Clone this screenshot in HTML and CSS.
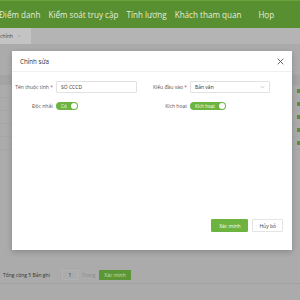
FILE: index.html
```html
<!DOCTYPE html>
<html lang="vi">
<head>
<meta charset="utf-8">
<link rel="stylesheet" href="styles.css">
</head>
<body>
<header class="nav">
  <span class="nav-item first">Điểm danh</span>
  <span class="nav-item">Kiểm soát truy cập</span>
  <span class="nav-item">Tính lương</span>
  <span class="nav-item">Khách tham quan</span>
  <span class="nav-item wide">Họp</span>
  <span class="nav-item">N</span>
</header>
<div class="tabs">
  <div class="tab">chỉnh <span class="tab-x">×</span></div>
</div>
<main class="content">
  <div class="table">
    <div class="thead"></div>
    <div class="trow"><i class="ico"></i></div>
    <div class="trow"><i class="ico"></i></div>
    <div class="trow"><i class="ico"></i></div>
    <div class="trow"><i class="ico"></i></div>
    <div class="trow"><i class="ico"></i></div>
  </div>
  <div class="pager">
    <span class="total">Tổng cộng 5 Bản ghi</span>
    <span class="page-input">1</span>
    <span class="page-label">Trang</span>
    <span class="page-btn">Xác minh</span>
  </div>
</main>

<div class="modal">
  <div class="modal-head">
    <span class="modal-title">Chỉnh sửa</span>
    <svg class="close" width="7" height="7" viewBox="0 0 10 10"><path d="M1 1L9 9M9 1L1 9" stroke="#555" stroke-width="1.3" fill="none"/></svg>
  </div>
  <div class="modal-body">
    <div class="grid">
      <div class="field">
        <label class="lbl">Tên thuộc tính <em>*</em></label>
        <div class="input">SỐ CCCD</div>
      </div>
      <div class="field">
        <label class="lbl">Kiểu đầu vào <em>*</em></label>
        <div class="input select">Bản văn
          <svg class="caret" width="5" height="4" viewBox="0 0 10 6"><path d="M1 1L5 5L9 1" stroke="#bbb" stroke-width="1.4" fill="none"/></svg>
        </div>
      </div>
      <div class="field">
        <label class="lbl">Độc nhất</label>
        <div class="switch"><span class="sw-text">Có</span><span class="knob"></span></div>
      </div>
      <div class="field">
        <label class="lbl">Kích hoạt</label>
        <div class="switch"><span class="sw-text">Kích hoạt</span><span class="knob"></span></div>
      </div>
    </div>
  </div>
  <div class="modal-foot">
    <button class="btn primary">Xác minh</button>
    <button class="btn">Hủy bỏ</button>
  </div>
</div>
</body>
</html>
```
FILE: styles.css
```css
* { box-sizing: border-box; }
html, body { margin: 0; padding: 0; }
body {
  width: 300px;
  height: 300px;
  overflow: hidden;
  background: #ababab;
  font-family: "Open Sans", "Noto Sans", Arial, sans-serif;
  position: relative;
}
.nav {
  height: 28px;
  background: #588f30;
  border-top: 1px solid #6aa23c;
  display: flex;
  align-items: center;
  white-space: nowrap;
  font-size: 8.1px;
  color: #e6eedd;
}
.nav-item { margin-right: 8px; }
.nav-item.first { margin-left: -1px; }
.nav-item.wide { margin-left: 9px; margin-right: 27px; }
.tabs {
  height: 16px;
  background: #b4b4b4;
  display: flex;
}
.tab {
  width: 31px;
  background: #c4c4c4;
  font-size: 5px;
  color: #444;
  display: flex;
  align-items: center;
  gap: 5px;
}
.tab-x { color: #999; font-size: 5px; }
.content {
  padding-top: 31px;
  display: flex;
  flex-direction: column;
}
.table {
  height: 191px;
  display: flex;
  flex-direction: column;
}
.thead { height: 10px; width: 100%; background: #a4a4a4; }
.trow {
  height: 13px;
  width: 100%;
  display: flex;
  justify-content: flex-end;
  align-items: center;
  border-bottom: 1px solid #a6a6a6;
}
.ico { width: 3px; height: 4px; background: #5a8f35; display: block; }
.pager {
  height: 18px;
  display: flex;
  align-items: center;
  font-size: 5px;
  color: #333;
  padding-left: 3px;
  border-bottom: 1px solid #a0a0a0;
  white-space: nowrap;
}
.total { width: 59px; }
.page-input {
  width: 16px; height: 10px;
  border: 1px solid #b2b2b2;
  display: flex; align-items: center; justify-content: center;
  margin-right: 4px;
}
.page-label { color: #8a8a8a; margin-right: 4px; }
.page-btn {
  background: #5d9636; color: #c8e0b8;
  height: 10px; padding: 0 5px;
  display: flex; align-items: center;
}

.modal {
  position: absolute;
  left: 12px;
  top: 51px;
  width: 280px;
  height: 199px;
  background: #fff;
  box-shadow: 0 2px 6px rgba(0,0,0,0.2);
  display: flex;
  flex-direction: column;
}
.modal-head {
  height: 21px;
  border-bottom: 1px solid #f0f0f0;
  display: flex;
  align-items: center;
  justify-content: space-between;
  padding: 0 8px;
}
.modal-title { font-size: 6.2px; color: #333; }
.close { display: block; }
.modal-body { flex: 1; padding: 9px 22px 0 3px; }
.grid {
  display: grid;
  grid-template-columns: 134px 134px;
  row-gap: 9px;
}
.field { display: flex; align-items: center; }
.lbl {
  width: 38px;
  text-align: right;
  font-size: 5px;
  color: #555;
  margin-right: 3px;
  white-space: nowrap;
}
.lbl em { color: #e04040; font-style: normal; }
.input {
  width: 81px;
  height: 12px;
  border: 1px solid #e2e2e2;
  border-radius: 1px;
  font-size: 5px;
  color: #333;
  display: flex;
  align-items: center;
  padding-left: 4px;
}
.select { justify-content: space-between; padding-right: 4px; width: 80px; }
.caret { display: block; }
.switch {
  height: 8px;
  border-radius: 4px;
  background: #6ab43f;
  display: flex;
  align-items: center;
  padding: 0 1px 0 5px;
  gap: 4px;
  font-size: 4.6px;
  color: #fff;
  white-space: nowrap;
}
.knob { width: 6px; height: 6px; border-radius: 50%; background: #fff; }
.modal-foot {
  height: 31px;
  display: flex;
  justify-content: flex-end;
  align-items: flex-start;
  gap: 4px;
  padding: 0 9px 0 0;
}
.btn {
  height: 13px;
  font-family: inherit;
  font-size: 5px;
  border: 1px solid #e4e4e4;
  background: #fff;
  color: #444;
  padding: 0 6px;
  border-radius: 1px;
  white-space: nowrap;
}
.btn.primary { background: #6cb33f; border-color: #6cb33f; color: #fff; width: 37px; padding: 0; }
```
